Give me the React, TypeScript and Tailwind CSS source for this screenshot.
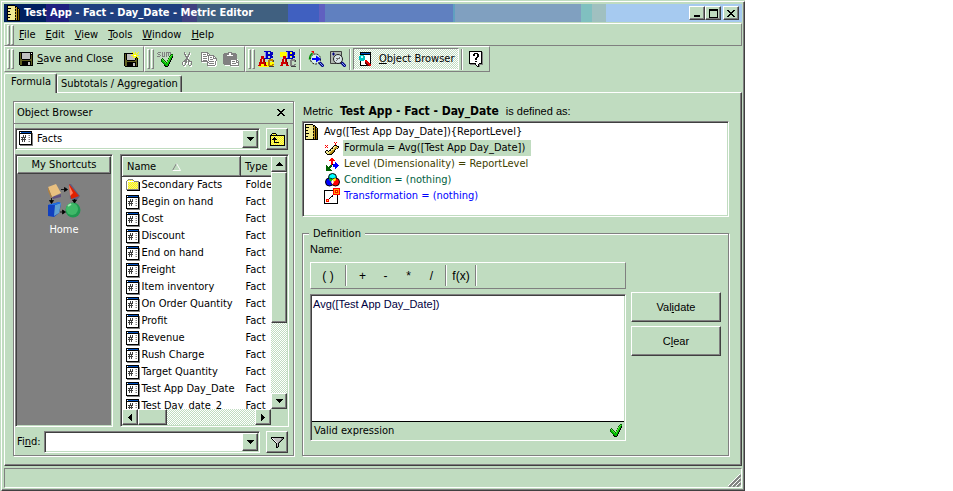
import React, { useState } from "react";

const raised =
  "border border-t-white border-l-white border-b-[#404040] border-r-[#404040] shadow-[inset_-1px_-1px_0_#808080]";
const sunken =
  "border border-t-[#808080] border-l-[#808080] border-b-white border-r-white shadow-[inset_1px_1px_0_#404040,inset_-1px_-1px_0_#c0dcc0]";
const thinRaised =
  "border border-t-white border-l-white border-b-[#808080] border-r-[#808080]";
const thinSunken =
  "border border-t-[#808080] border-l-[#808080] border-b-white border-r-white";
const dither =
  "bg-[conic-gradient(#fff_25%,#c0dcc0_0_50%,#fff_0_75%,#c0dcc0_0)] bg-[length:2px_2px]";

const palette: Record<string, string> = {
  k: "#000000",
  w: "#ffffff",
  g: "#808080",
  d: "#404040",
  l: "#c0c0c0",
  b: "#0000ff",
  n: "#000080",
  s: "#0050c0",
  r: "#ff0000",
  m: "#900000",
  y: "#ffff00",
  o: "#c09820",
  c: "#f0e890",
  e: "#806000",
  G: "#00c000",
  D: "#006000",
  L: "#60e040",
  O: "#606020",
};

const Pixels: React.FC<{ rows: string[] }> = ({ rows }) => {
  const width = Math.max(...rows.map((r) => r.length));
  return (
    <svg
      width={width}
      height={rows.length}
      viewBox={`0 0 ${width} ${rows.length}`}
      shapeRendering="crispEdges"
      className="block shrink-0"
      aria-hidden="true"
    >
      {rows.flatMap((row, y) =>
        [...row].map((ch, x) =>
          palette[ch] ? (
            <rect key={`${x}-${y}`} x={x} y={y} width="1" height="1" fill={palette[ch]} />
          ) : null,
        ),
      )}
    </svg>
  );
};

const icons = {
  ruler: [
    "kkkkkkkk.....",
    "kccccccckk...",
    "kccccccckok..",
    "kkkkccccookk.",
    "kccccccckokok",
    "kccccccckokek",
    "kkkcccccookek",
    "kccccccckokek",
    "kccccccckokek",
    "kkkkccccookek",
    "kccccccckokek",
    "kccccccckokek",
    "kkkcccccookek",
    "kccccccckokek",
    "kccccccckokek",
    "kkkkkkkkkkkkk",
  ],
  save: [
    "kkkkkkkkkkkkkk",
    "kOkllllllllkwk",
    "kOkllllllllkkk",
    "kOkllllllllkOk",
    "kOkllllllllkOk",
    "kOkllllllllkOk",
    "kOkllllllllkOk",
    "kOOkkkkkkkkOOk",
    "kOOOOOOOOOOOOk",
    "kOOkkkkkkkkkOk",
    "kOOkkkkkkllkOk",
    "kOOkkkkkkllkOk",
    "kOOkkkkkkllkOk",
    ".kkkkkkkkkkkkk",
  ],
  saveNew: [
    "........y..y..y",
    "kkkkkkkkky.y.y.",
    "kOkllllllyyyy..",
    "kOkllllyyywwyyy",
    "kOkllllllyyyy..",
    "kOklllllly.yky.",
    "kOkllllllllkOky",
    "kOkllllllllkOk.",
    "kOOkkkkkkkkOOk.",
    "kOOOOOOOOOOOOk.",
    "kOOkkkkkkkkkOk.",
    "kOOkkkkkkllkOk.",
    "kOOkkkkkkllkOk.",
    "kOOkkkkkkllkOk.",
    ".kkkkkkkkkkkkk.",
  ],
  check: [
    "..........DD",
    ".........DLG",
    "........DLGk",
    "........LGGk",
    ".D.....DLGk.",
    "DLD....LGGk.",
    "DGLD..DLGk..",
    "DGGLD.LGGk..",
    ".DGGLDLGk...",
    "..DGGGGGk...",
    "...DGGGk....",
    "...kDGGk....",
    "....kkk.....",
  ],
  sum: [
    ".ggg.g.g.ggggg..",
    "g....g.g.g.g.g..",
    ".gg..g.g.g.g.gDD",
    "...g.g.g.g.g.DLG",
    "ggg..ggg.g..DLGk",
    "............LGGk",
    ".....D.....DLGk.",
    "....DLD....LGGk.",
    "....DGLD..DLGk..",
    "....DGGLD.LGGk..",
    ".....DGGLDLGk...",
    "......DGGGGGk...",
    ".......DGGGk....",
    ".......kDGGk....",
    "........kkk.....",
  ],
  cut: [
    "..g....g..",
    "..gw...gw.",
    "..gg..ggw.",
    "...gw.gw..",
    "...ggggw..",
    "....ggw...",
    "....ggw...",
    "...gggg...",
    "..gggwgg..",
    ".gggg.gggg",
    "gwwggwgwwg",
    "gw.gwwgw.g",
    "gw.gw.gw.g",
    ".ggw...ggw",
    "..ww....ww",
  ],
  copy: [
    "ggggggg.........",
    "gwwwwwgg........",
    "gwgggwgwg.......",
    "gwwwwwggggggg...",
    "gwggggwgwwwwgg..",
    "gwwwwwwgwggwgwg.",
    "gwggggwgwwwwgggg",
    "gwwwwwwgwgggwwwg",
    "gwggggwgwwwwwwwg",
    "gggggggwgggggwgw",
    ".wwwwwggwwwwwwgw",
    "......gwgggggwgw",
    "......gwwwwwwwgw",
    "......ggggggggww",
    ".......wwwwwwww.",
  ],
  paste: [
    ".....gggg.......",
    ".gggggwwggggg...",
    "ggggggwwgggggg..",
    "ggggwwwwwwgggg..",
    "gggggggggggggg..",
    "gggggggggggggg..",
    "gggggggggggggg..",
    "ggggggggggggggw.",
    "ggggggggwwwwwgg.",
    "ggggggggwgggwgwg",
    "ggggggggwwwwwggg",
    "ggggggggwggggwwg",
    ".gggggggwwwwwwwg",
    "..wwwwwggggggggg",
    "........wwwwwwww",
  ],
  grid: [
    "kkkkkkkkkkkkk.",
    "kwssssssssssk.",
    "kkkkkkkkkkkkkg",
    "kwwwwwwwwwwwkg",
    "kwwwdwdwwlgwkg",
    "kwwwdwdwwwwwkg",
    "kwdddddwwlgwkg",
    "kwwdwdwwwwwwkg",
    "kwdddddwwlgwkg",
    "kwwdwdwwwwwwkg",
    "kwwdwdwwwlgwkg",
    "kwwwwwwwwwwwkg",
    "kwwwwwwwwwwwkg",
    "kkkkkkkkkkkkkg",
    ".ggggggggggggg",
  ],
  folder: [
    "..ggggg.......",
    ".gycycyg......",
    "gwwwwwwwggggg.",
    "gwycycycycycgk",
    "gwcycycycycygk",
    "gwycycycycycgk",
    "gwcycycycycygk",
    "gwycycycycycgk",
    "gwcycycycycygk",
    "gwycycycycycgk",
    "gggggggggggggk",
    ".kkkkkkkkkkkkk",
  ],
  folderUp: [
    "..kkkk.........",
    ".kcycyk........",
    "kkkkkkkkkkkkkkk",
    "kycycycycycycyk",
    "kcyckcycycycyck",
    "kyckkkcycycycyk",
    "kckkkkkcycycyck",
    "kycykycycycycyk",
    "kcyckcycycycyck",
    "kycykkkkkycycyk",
    "kcycycycycycyck",
    "kycycycycycycyk",
    "kkkkkkkkkkkkkkk",
  ],
  funnel: [
    "kkkkkkkkkkkkk",
    "kwllllllllggk",
    ".kwlllllllgk.",
    "..kwlllllgk..",
    "...kwlllgk...",
    "....kwlgk....",
    ".....klk.....",
    ".....klk.....",
    ".....klk.....",
    ".....kgk.....",
    ".....kk......",
  ],
  formula: [
    ".........r.r..",
    "..........r...",
    "..........r...",
    "r.r......kkk..",
    ".r......kccokk",
    "r.r....kccoock",
    "......kkcoook.",
    ".....kcccok...",
    ".kk.kkcook....",
    "kcckccooek....",
    "kccccooek.....",
    ".kccooek......",
    "..kkkkk.......",
  ],
  level: [
    ".....rr......",
    "....rrrr.....",
    "...rrrrrr....",
    ".....rr......",
    ".....rr..b...",
    ".....rr..bb..",
    ".....rkbbbbb.",
    "D...DD.bbbbbb",
    "DD.DDD.bbbbb.",
    "DDDDD....bb..",
    "DDDD.....b...",
    "DDDDD........",
    "DDDDDD.......",
  ],
  help: [
    "kkkkkkkkkkkkk.",
    "kwwwwwwwwwwwkg",
    "kwwwwkkkkwwwkg",
    "kwwwkkwwkkwwkg",
    "kwwwkkwwkkwwkg",
    "kwwwwwwwkkwwkg",
    "kwwwwwwkkwwwkg",
    "kwwwwwkkwwwwkg",
    "kwwwwwkkwwwwkg",
    "kwwwwwwwwwwwkg",
    "kwwwwwkkwwwwkg",
    "kwwwwwwwwwwwkg",
    "kkkkkkkwwwkkkg",
    ".gggggkwwkgggg",
    ".......kwkg...",
    "........kkg...",
  ],
  left: ["...k", "..kk", ".kkk", "kkkk", ".kkk", "..kk", "...k"],
  right: ["k...", "kk..", "kkk.", "kkkk", "kkk.", "kk..", "k..."],
  up: ["...k...", "..kkk..", ".kkkkk.", "kkkkkkk"],
  down: ["kkkkkkk", ".kkkkk.", "..kkk..", "...k..."],
  minimize: ["........", "........", "........", "........", "........", "........", ".kkkkkk.", ".kkkkkk."],
  maximize: [
    "kkkkkkkkk",
    "kkkkkkkkk",
    "k.......k",
    "k.......k",
    "k.......k",
    "k.......k",
    "k.......k",
    "k.......k",
    "kkkkkkkkk",
  ],
  close: ["kk....kk", ".kk..kk.", "..kkkk..", "...kk...", "..kkkk..", ".kk..kk.", "kk....kk"],
};

const AbcIcon: React.FC<{ variant: "bottom" | "top" }> = ({ variant }) => (
  <svg width="17" height="16" viewBox="0 0 17 16" shapeRendering="crispEdges" aria-hidden="true">
    <rect x={variant === "top" ? 0 : 1} y={variant === "top" ? 1 : 11} width="15" height="5" fill="#ffff00" />
    <path d="M6 0h7v1h2v3h-1v1h1v2h-2v1H6V7h1V1H6zM10 1v2h2V1zM10 5v2h2V5z" fill="#0000c0" fillRule="evenodd" />
    <path d="M7 1h1v6H7z" fill="#8080ff" />
    <path d="M3 5h3v3h1v3h1v3h1v1H6v-2H3v2H0v-1h1v-3h1V8h1zM4 8v3h1V8z" fill="#d00000" fillRule="evenodd" />
    <path d="M6 8h1v3h1v3H7v-3H6z" fill="#800000" />
    <path
      d="M11 8h4v1h1v2h-2v-1h-2v4h2v-1h2v1h-1v2h-4v-1h-1V9h1z"
      fill={variant === "top" ? "#808080" : "#c08000"}
    />
    <path d="M15 9h1v2h-1zM11 15h5v1h-5z" fill="#404040" />
  </svg>
);

const FindArrowIcon = () => (
  <svg width="16" height="16" viewBox="0 0 16 16" aria-hidden="true">
    <circle cx="7.5" cy="8" r="5" fill="#d8f0e8" stroke="#000" strokeDasharray="2 1" />
    <path d="M1.5 8.5c0-3 1-5 3-6.5" fill="none" stroke="#009000" strokeWidth="1.500" />
    <path d="M3 0h3v3z" fill="#f00000" />
    <path d="M4 7h4V4.500l5 3.500-5 3.500V9H4z" fill="#0000ff" />
    <path d="m11.500 11.500 4 4" stroke="#000080" strokeWidth="3" />
    <path d="m12 12 3 3" stroke="#80a0ff" />
  </svg>
);

const FindInGridIcon = () => (
  <svg width="16" height="16" viewBox="0 0 16 16" aria-hidden="true">
    <path d="M.5.5h11v12H.5z" fill="#b0b8b0" stroke="#404040" />
    <path d="M2 3h3M3.500 1.500v3" stroke="#000080" />
    <circle cx="8" cy="8" r="4.500" fill="#d8e4e8" stroke="#202020" />
    <path d="m6 10 4-4M6 7.500h4" stroke="#707070" />
    <path d="m11.500 11.500 4 4" stroke="#000080" strokeWidth="3" />
    <path d="m12 12 3 3" stroke="#80a0ff" />
  </svg>
);

const BrowserIcon = () => (
  <svg width="15" height="16" viewBox="0 0 15 16" shapeRendering="crispEdges" aria-hidden="true">
    <path d="M2 1h11v14H2z" fill="#000" />
    <path d="M3 4h9v10H3z" fill="#fff" />
    <path d="M3 2h9v1H3z" fill="#0050c0" />
    <path d="M1 5h1V4h4v1h1v4H6v1H2V9H1z" fill="#00c0c0" />
    <path d="M3 5h2v2H3z" fill="#c0ffff" />
    <path d="M7 9h2v1h1v1h1v1h1v1h1v2h-2v-1h-1v-1H9v-1H8v-1H7z" fill="#e00000" />
    <path d="M7 11h1v1h1v1h1v1h1v1H9v-1H8v-1H7z" fill="#600000" />
  </svg>
);

const ConditionIcon = () => (
  <svg width="15" height="14" viewBox="0 0 15 14" aria-hidden="true">
    <circle cx="7.500" cy="4.500" r="4" fill="#00ffff" stroke="#000" />
    <circle cx="4.500" cy="9" r="4" fill="#0000ff" stroke="#000" />
    <circle cx="10.500" cy="9" r="4" fill="#ff0000" stroke="#000" />
    <path d="M4 5.500c1.500-.5 3 .500 3.500 1.500L6 8.500C4.500 8 4 7 4 5.500z" fill="#00c000" />
    <path d="M11 5.500c-1.500-.5-3 .500-3.500 1.500L9 8.500c1.500-.5 2-1.500 2-3z" fill="#ffff00" />
    <path d="M7.500 6.500 9 9l-1.500 2.500L6 9z" fill="#fff" />
  </svg>
);

const TransformIcon = () => (
  <svg width="16" height="16" viewBox="0 0 16 16" shapeRendering="crispEdges" aria-hidden="true">
    <path d="M.5 2.500h13v13H.5z" fill="#fff" stroke="#000" />
    <path d="M9 0h7v7H9z" fill="#ff0000" />
    <path d="M10 1h5v5h-5z" fill="#ffa000" />
    <path d="M11 2h3v3h-3z" fill="#ff0000" />
    <path d="M12 3h1v1h-1z" fill="#ffff00" />
    <path d="M2 11h3v3H2z" fill="#ff0000" />
    <path d="M3 12h1v1H3z" fill="#ffff00" />
    <path d="M5 10h1v1H5zM6 9h1v1H6zM7 8h2v1H7zM8 7h1v1H8z" fill="#000" />
  </svg>
);

const HomeIcon = () => (
  <svg width="34" height="34" viewBox="0 0 34 34" aria-hidden="true">
    <path d="m5 13 9-3v3l-8 2z" fill="#605080" />
    <path d="M1 3 9 0l5 9-9 4z" fill="#e8c080" />
    <path d="m1 3 4 10-1 1L1 7z" fill="#b08040" />
    <path d="M22 0h2l9 12-3 4-7-1z" fill="#606080" />
    <path d="M22 0 32 12l-8 3z" fill="#e02000" />
    <path d="m22 1 4 8-3 3z" fill="#ff8060" />
    <path d="m1 21 11-3 2 2-2 9-5 4-6-1z" fill="#1040c0" />
    <path d="m8 21 6-2-2 10-5 3z" fill="#60a0d0" />
    <path d="m1 21 11-3 2 1-6 2z" fill="#2070e0" />
    <circle cx="26" cy="26" r="7.500" fill="#209850" />
    <circle cx="25" cy="25" r="6" fill="#40b868" />
    <path d="m21 22 3-2" stroke="#a0e8b0" strokeWidth="2" />
    <path
      d="M14 5.500h3M17.500 3.500v4l3-2zM4.500 14v3M2.500 16.500h4l-2 3zM27.500 15v2M25.500 16h4l-2 3zM13 28h2M15.500 26v4l3-2z"
      fill="#000"
      stroke="#000"
      strokeWidth=".8"
    />
  </svg>
);

const Gripper = () => (
  <span className="flex h-5 shrink-0 gap-px" aria-hidden="true">
    <span className="w-[3px] border border-t-white border-l-white border-b-[#808080] border-r-[#808080]" />
    <span className="w-[3px] border border-t-white border-l-white border-b-[#808080] border-r-[#808080]" />
  </span>
);

const Divider = () => (
  <span className="h-[21px] w-0.5 shrink-0 border-l border-r border-l-[#808080] border-r-white" aria-hidden="true" />
);

const ToolButton: React.FC<{ label: string; children: React.ReactNode }> = ({ label, children }) => (
  <button type="button" aria-label={label} className="flex h-5 w-[22px] items-center justify-center">
    {children}
  </button>
);

const menus = ["File", "Edit", "View", "Tools", "Window", "Help"];

const facts = [
  { name: "Secondary Facts", type: "Folder" },
  { name: "Begin on hand", type: "Fact" },
  { name: "Cost", type: "Fact" },
  { name: "Discount", type: "Fact" },
  { name: "End on hand", type: "Fact" },
  { name: "Freight", type: "Fact" },
  { name: "Item inventory", type: "Fact" },
  { name: "On Order Quantity", type: "Fact" },
  { name: "Profit", type: "Fact" },
  { name: "Revenue", type: "Fact" },
  { name: "Rush Charge", type: "Fact" },
  { name: "Target Quantity", type: "Fact" },
  { name: "Test App Day_Date", type: "Fact" },
  { name: "Test Day_date_2", type: "Fact" },
];

const parts = [
  {
    text: "Formula = Avg([Test App Day_Date])",
    color: "bg-[#c0dcc0] text-black",
    icon: <Pixels rows={icons.formula} />,
  },
  {
    text: "Level (Dimensionality) = ReportLevel",
    color: "text-[#404000]",
    icon: <Pixels rows={icons.level} />,
  },
  { text: "Condition = (nothing)", color: "text-[#006040]", icon: <ConditionIcon /> },
  { text: "Transformation = (nothing)", color: "text-[#0000ff]", icon: <TransformIcon /> },
];

const TitleBar = () => (
  <header className="flex h-[18px] items-center bg-[linear-gradient(90deg,#002060_0_42px,#202080_0_65px,#204080_0_178px,#404080_0_193px,#406080_0_284px,#4060c0_0_315px,#6060c0_0_321px,#6080c0_0_449px,#60a0c0_0_451px,#80a0c0_0_577px,#80c0c0_0_588px,#a0c0c0_0_602px,#a6caf0_0)] pr-[3px] pl-[3px] text-white">
    <Pixels rows={icons.ruler} />
    <h1 className="ml-1 flex-1 font-bold whitespace-nowrap">Test App - Fact - Day_Date - Metric Editor</h1>
    <div className="flex bg-[#c0dcc0]">
      <button type="button" aria-label="Minimize" className={`flex h-3.5 w-4 items-center justify-center ${raised}`}>
        <Pixels rows={icons.minimize} />
      </button>
      <button type="button" aria-label="Maximize" className={`flex h-3.5 w-4 items-center justify-center ${raised}`}>
        <Pixels rows={icons.maximize} />
      </button>
    </div>
    <button
      type="button"
      aria-label="Close"
      className={`ml-0.5 flex h-3.5 w-4 items-center justify-center bg-[#c0dcc0] ${raised}`}
    >
      <Pixels rows={icons.close} />
    </button>
  </header>
);

const MenuBar = () => (
  <nav className={`mt-px flex h-[23px] items-center px-0.5 ${thinRaised}`}>
    <Gripper />
    <div className="flex">
      {menus.map((menu) => (
        <button key={menu} type="button" className="px-[5px]">
          <u>{menu[0]}</u>
          {menu.slice(1)}
        </button>
      ))}
    </div>
  </nav>
);

const Toolbar = () => (
  <div className="flex h-[26px]">
    <div className={`flex w-[140px] items-center px-0.5 ${thinRaised}`}>
      <Gripper />
      <button type="button" className="ml-[5px] flex items-center gap-1 whitespace-nowrap">
        <Pixels rows={icons.save} />
        <span>
          <u>S</u>ave and Close
        </span>
      </button>
      <button type="button" aria-label="Save as new" className="ml-auto pr-0.5">
        <Pixels rows={icons.saveNew} />
      </button>
    </div>
    <div className={`flex w-[101px] items-center px-0.5 ${thinRaised}`}>
      <Gripper />
      <div className="flex">
        <ToolButton label="Subtotals">
          <Pixels rows={icons.sum} />
        </ToolButton>
        <ToolButton label="Cut">
          <Pixels rows={icons.cut} />
        </ToolButton>
        <ToolButton label="Copy">
          <Pixels rows={icons.copy} />
        </ToolButton>
        <ToolButton label="Paste">
          <Pixels rows={icons.paste} />
        </ToolButton>
      </div>
    </div>
    <div className={`flex items-center px-0.5 ${thinRaised}`}>
      <Gripper />
      <div className="flex">
        <ToolButton label="Number formatting">
          <AbcIcon variant="bottom" />
        </ToolButton>
        <ToolButton label="Header formatting">
          <AbcIcon variant="top" />
        </ToolButton>
      </div>
      <Divider />
      <div className="ml-1 flex">
        <ToolButton label="Search dependents">
          <FindArrowIcon />
        </ToolButton>
        <ToolButton label="Search components">
          <FindInGridIcon />
        </ToolButton>
      </div>
      <Divider />
      <button
        type="button"
        aria-pressed="true"
        className={`mx-0.5 flex h-[22px] items-center gap-1.5 px-1 whitespace-nowrap ${thinSunken} ${dither}`}
      >
        <BrowserIcon />
        <span>
          <u>O</u>bject Browser
        </span>
      </button>
      <Divider />
      <span className="w-0.5" />
      <ToolButton label="Help">
        <Pixels rows={icons.help} />
      </ToolButton>
    </div>
  </div>
);

const TabStrip: React.FC<{ active: string; onSelect: (tab: string) => void }> = ({ active, onSelect }) => (
  <div className="mt-0.5 flex h-[18px] items-end" role="tablist">
    {["Formula", "Subtotals / Aggregation"].map((tab) => (
      <button
        key={tab}
        type="button"
        role="tab"
        aria-selected={tab === active}
        onClick={() => onSelect(tab)}
        className={`rounded-t-xs border-t border-r border-l border-t-white border-r-[#404040] border-l-white whitespace-nowrap shadow-[inset_-1px_0_0_#808080] ${
          tab === active ? "z-10 -mb-px h-5 bg-[#c0dcc0] pr-[5px] pb-1 pl-1.5" : "h-[17px] px-[3px]"
        }`}
      >
        {tab}
      </button>
    ))}
  </div>
);

const ScrollButton: React.FC<{ label: string; rows: string[] }> = ({ label, rows }) => (
  <button
    type="button"
    aria-label={label}
    className={`flex size-4 shrink-0 items-center justify-center bg-[#c0dcc0] ${raised}`}
  >
    <Pixels rows={rows} />
  </button>
);

const FactList = () => (
  <div className={`grid min-h-0 w-[169px] grid-cols-[1fr_16px] grid-rows-[1fr_16px] bg-[#c0dcc0] p-px ${sunken}`}>
    <div className="min-h-0 overflow-hidden bg-white">
      <table className="w-[190px] table-fixed border-collapse text-left">
        <thead>
          <tr className="h-5 bg-[#c0dcc0]">
            <th className={`w-[118px] pl-1 font-normal ${raised}`}>
              <span className="flex items-center gap-4">
                Name
                <svg width="9" height="8" viewBox="0 0 9 8" aria-hidden="true">
                  <path d="M.5 7.500 4.500.5" stroke="#808080" />
                  <path d="m4.500.5 4 7H.5" fill="none" stroke="#fff" />
                </svg>
              </span>
            </th>
            <th className={`pl-1 font-normal ${raised}`}>Type</th>
          </tr>
        </thead>
        <tbody>
          {facts.map((fact) => (
            <tr key={fact.name} className="h-[17px]">
              <td className="p-0 pl-[3px]">
                <span className="flex items-center gap-0.5 whitespace-nowrap">
                  <Pixels rows={fact.type === "Folder" ? icons.folder : icons.grid} />
                  {fact.name}
                </span>
              </td>
              <td className="p-0 pl-[5px]">{fact.type}</td>
            </tr>
          ))}
        </tbody>
      </table>
    </div>
    <div className={`flex flex-col ${dither}`}>
      <ScrollButton label="Scroll up" rows={icons.up} />
      <div className={`h-[151px] bg-[#c0dcc0] ${raised}`} />
      <span className="flex-1" />
      <ScrollButton label="Scroll down" rows={icons.down} />
    </div>
    <div className={`flex ${dither}`}>
      <ScrollButton label="Scroll left" rows={icons.left} />
      <div className={`w-[29px] bg-[#c0dcc0] ${raised}`} />
      <span className="flex-1" />
      <ScrollButton label="Scroll right" rows={icons.right} />
    </div>
  </div>
);

const ObjectBrowser = () => {
  const [folder, setFolder] = useState("Facts");
  const [find, setFind] = useState("");

  return (
    <aside className="flex min-h-0 w-[281px] shrink-0 flex-col border border-[#808080] shadow-[inset_1px_1px_0_#fff,1px_1px_0_#fff]">
      <div className="flex h-[22px] shrink-0 items-center justify-between border-b border-[#808080] pr-2 pl-[3px]">
        <h2>Object Browser</h2>
        <button type="button" aria-label="Close object browser">
          <Pixels rows={icons.close} />
        </button>
      </div>

      <div className="flex min-h-0 flex-1 flex-col gap-1 pt-1 pr-1 pb-0.5 pl-px">
        <div className="flex items-center gap-1.5">
          <div className={`relative h-[22px] w-[245px] bg-white p-0.5 ${sunken}`}>
            <span className="pointer-events-none absolute top-0.5 left-[3px]">
              <Pixels rows={icons.grid} />
            </span>
            <select
              aria-label="Folder"
              value={folder}
              onChange={(e) => setFolder(e.target.value)}
              className="h-4 w-full appearance-none pl-[19px] outline-none"
            >
              <option>Facts</option>
            </select>
            <span
              className={`pointer-events-none absolute top-px right-px flex h-[18px] w-4 items-center justify-center bg-[#c0dcc0] ${raised}`}
            >
              <Pixels rows={icons.down} />
            </span>
          </div>
          <button
            type="button"
            aria-label="Up one level"
            className={`flex h-[22px] w-[22px] items-center justify-center ${raised}`}
          >
            <Pixels rows={icons.folderUp} />
          </button>
        </div>

        <div className="flex min-h-0 flex-1 justify-between">
          <div className={`w-[98px] bg-[#808080] p-px ${sunken}`}>
            <h3 className={`h-[18px] bg-[#c0dcc0] text-center ${raised}`}>My Shortcuts</h3>
            <button type="button" className="mx-auto mt-2.5 flex flex-col items-center gap-1 text-white">
              <HomeIcon />
              Home
            </button>
          </div>
          <FactList />
        </div>

        <div className="flex items-center">
          <label htmlFor="find" className="w-[29px] pl-0.5">
            Fi<u>n</u>d:
          </label>
          <div className={`relative h-[22px] w-[216px] bg-white p-0.5 ${sunken}`}>
            <input
              id="find"
              value={find}
              onChange={(e) => setFind(e.target.value)}
              className="h-4 w-[190px] px-0.5 outline-none"
            />
            <button
              type="button"
              aria-label="Recent searches"
              className={`absolute top-px right-px flex h-[18px] w-4 items-center justify-center bg-[#c0dcc0] ${raised}`}
            >
              <Pixels rows={icons.down} />
            </button>
          </div>
          <button
            type="button"
            aria-label="Filter"
            className={`ml-1.5 flex h-[22px] w-[22px] items-center justify-center ${raised}`}
          >
            <Pixels rows={icons.funnel} />
          </button>
        </div>
      </div>
    </aside>
  );
};

const Definition = () => {
  const [expression, setExpression] = useState("Avg([Test App Day_Date])");

  return (
    <section className="relative flex min-h-0 flex-1 border border-[#808080] px-[7px] pt-[7px] pb-3.5 font-['Liberation_Sans',sans-serif] shadow-[inset_1px_1px_0_#fff,1px_1px_0_#fff]">
      <h2 className="absolute -top-2 left-1.5 bg-[#c0dcc0] px-1 font-['DejaVu_Sans_Condensed',sans-serif]">
        Definition
      </h2>
      <div className="flex min-w-0 flex-1 flex-col">
        <label htmlFor="expression">Name:</label>
        <div className={`mt-[5px] flex h-[27px] items-center text-[12px] ${thinRaised}`}>
          <button type="button" className="w-[34px]">
            ( )
          </button>
          <Divider />
          <span className="w-1" />
          {["+", "-", "*", "/"].map((op) => (
            <button key={op} type="button" className="w-[23px]">
              {op}
            </button>
          ))}
          <span className="w-0.5" />
          <Divider />
          <button type="button" className="w-7">
            f(x)
          </button>
          <Divider />
        </div>
        <div className={`mt-[5px] flex min-h-0 flex-1 flex-col p-px ${sunken}`}>
          <textarea
            id="expression"
            value={expression}
            onChange={(e) => setExpression(e.target.value)}
            spellCheck={false}
            className="min-h-0 w-full flex-1 resize-none border-b border-black bg-white px-px text-[#000040] outline-none"
          />
          <div className="flex h-[17px] items-center justify-between px-0.5 font-['DejaVu_Sans_Condensed',sans-serif]">
            <output>Valid expression</output>
            <Pixels rows={icons.check} />
          </div>
        </div>
      </div>
      <div className="ml-[5px] flex w-[90px] shrink-0 flex-col gap-1 pt-[51px]">
        <button type="button" className={`h-[30px] ${raised}`}>
          Val<u>i</u>date
        </button>
        <button type="button" className={`h-[30px] ${raised}`}>
          C<u>l</u>ear
        </button>
      </div>
    </section>
  );
};

const MetricPane = () => (
  <div className="flex min-w-0 flex-1 flex-col">
    <p className="flex h-5 items-center gap-[7px] pl-px whitespace-nowrap">
      <span className="font-['Liberation_Sans',sans-serif]">Metric</span>
      <strong className="text-[12px]">Test App - Fact - Day_Date</strong>
      <span className="font-['Liberation_Sans',sans-serif]">is defined as:</span>
    </p>
    <div className={`h-24 shrink-0 bg-white p-0.5 ${sunken}`}>
      <div className="flex h-4 items-center gap-1.5">
        <Pixels rows={icons.ruler} />
        Avg([Test App Day_Date]){"{ReportLevel}"}
      </div>
      <ul>
        {parts.map((part) => (
          <li key={part.text} className="flex h-4 items-center gap-0.5 pl-[18px]">
            <span className="flex w-[18px] justify-center">{part.icon}</span>
            <span className={`pr-1.5 pl-px whitespace-nowrap ${part.color}`}>{part.text}</span>
          </li>
        ))}
      </ul>
    </div>
    <div className="mt-4 flex min-h-0 flex-1">
      <Definition />
    </div>
  </div>
);

const App: React.FC = () => {
  const [tab, setTab] = useState("Formula");

  return (
    <div className="h-screen bg-white pr-52 font-['DejaVu_Sans_Condensed',sans-serif] text-[11px] leading-4 text-black">
      <div className="flex h-full flex-col border-t border-l border-t-[#c0dcc0] border-l-[#c0dcc0] bg-[#c0dcc0]">
        <div className={`flex min-h-0 flex-1 flex-col p-0.5 ${raised}`}>
          <TitleBar />
          <MenuBar />
          <Toolbar />
          <TabStrip active={tab} onSelect={setTab} />
          <main className={`flex min-h-0 flex-1 gap-2 pt-2 pr-3 pb-[9px] pl-2 ${raised}`}>
            <ObjectBrowser />
            <MetricPane />
          </main>
          <footer className={`mt-0.5 flex h-5 shrink-0 items-end justify-end ${thinSunken}`}>
            <svg width="13" height="13" viewBox="0 0 13 13" aria-hidden="true">
              <path d="M1 13 13 1M5 13l8-8M9 13l4-4" stroke="#808080" strokeWidth="2" />
              <path d="M0 12 12 0M4 12l8-8M8 12l4-4" stroke="#fff" />
            </svg>
          </footer>
        </div>
      </div>
    </div>
  );
};

export default App;
